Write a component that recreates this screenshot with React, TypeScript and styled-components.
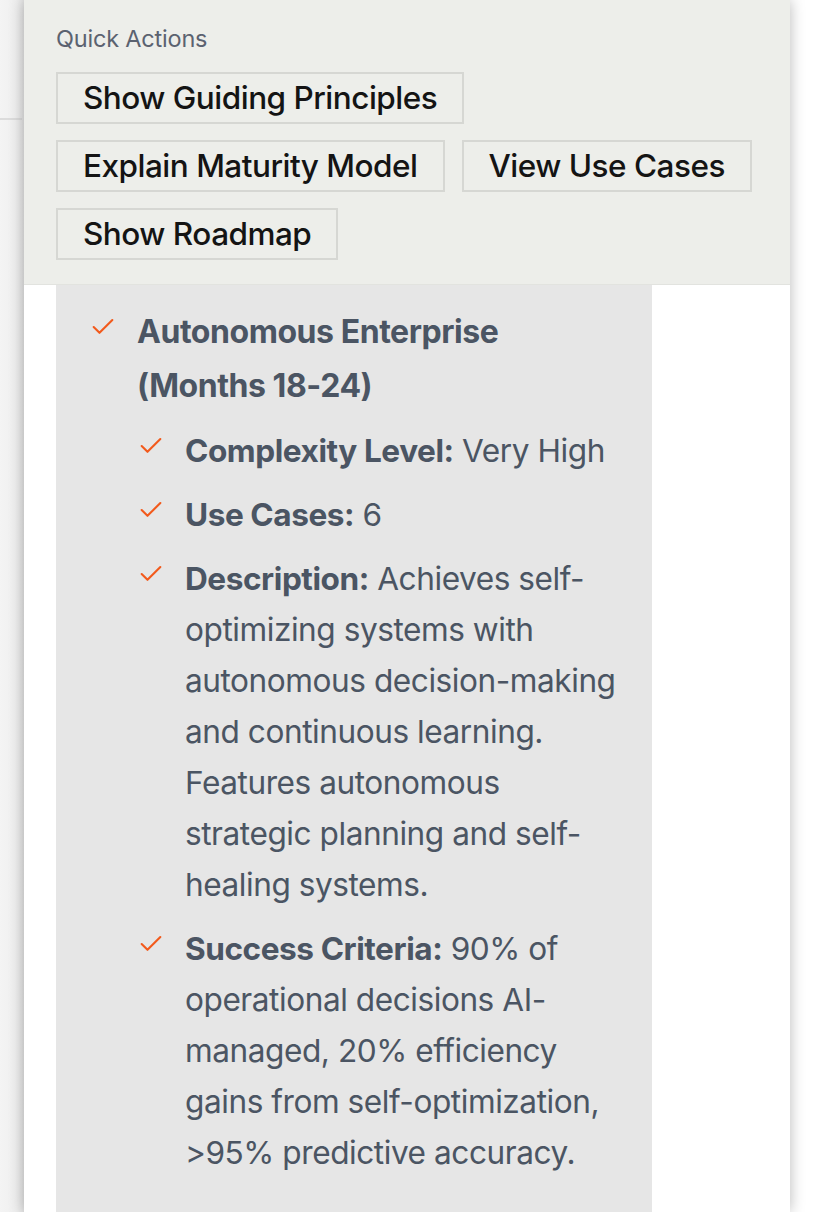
import React from 'react';
import styled, { createGlobalStyle } from 'styled-components';
import { Check } from 'lucide-react';

const GlobalStyle = createGlobalStyle`
  html, body {
    margin: 0;
    padding: 0;
    background: #ffffff;
  }
  body {
    font-family: Inter, 'Noto Sans', 'Liberation Sans', sans-serif;
    -webkit-font-smoothing: antialiased;
  }
`;

const Page = styled.div`
  display: flex;
  height: 1212px;
  overflow: hidden;
`;

const Gutter = styled.div`
  width: 24px;
  flex: none;
  background: linear-gradient(to right, #f4f4f4 0%, #efefef 70%, #e7e7e7 100%);
`;

const GutterRule = styled.div`
  margin-top: 118px;
  width: 22px;
  height: 2px;
  background: #dcdcdc;
`;

const Panel = styled.div`
  width: 766px;
  flex: none;
  background: #ffffff;
  box-shadow: 0 0 14px rgba(0, 0, 0, 0.28);
  position: relative;
  z-index: 1;
`;

const QuickActions = styled.div`
  background: #edeeea;
  padding: 25px 32px 24px;
  border-bottom: 1px solid #e2e3df;
`;

const Label = styled.div`
  font-size: 23.5px;
  line-height: 28px;
  color: #5b6270;
  letter-spacing: -0.2px;
`;

const ActionRow = styled.div`
  display: flex;
  flex-wrap: wrap;
  gap: 16px 17px;
  margin-top: 19px;
  max-width: 700px;
`;

const ActionButton = styled.button`
  height: 52px;
  padding: 0 25px;
  border: 2px solid #d6d7d3;
  background: transparent;
  color: #141414;
  font-family: inherit;
  font-size: 31.5px;
  font-weight: 500;
  letter-spacing: -0.5px;
  line-height: 1;
  cursor: pointer;
`;

const Body = styled.div`
  padding: 0 32px;
`;

const Response = styled.div`
  width: 596px;
  min-height: 960px;
  box-sizing: border-box;
  background: #e6e6e6;
  padding: 20px 30px 40px 33px;
`;

const List = styled.ul<{ nested?: boolean }>`
  list-style: none;
  margin: ${({ nested }) => (nested ? '12px 0 0' : '0')};
  padding: 0;
  display: flex;
  flex-direction: column;
  gap: 13px;
`;

const Item = styled.li<{ heading?: boolean }>`
  display: flex;
  align-items: flex-start;
  color: #4b5563;
  font-size: ${({ heading }) => (heading ? '32px' : '31.6px')};
  letter-spacing: -0.45px;
  line-height: ${({ heading }) => (heading ? '54px' : '51px')};
  font-weight: ${({ heading }) => (heading ? 700 : 400)};
`;

const Mark = styled.span<{ heading?: boolean }>`
  width: 48px;
  flex: none;
  display: flex;
  padding-top: ${({ heading }) => (heading ? '8px' : '7px')};
  color: #f25a1c;
`;

const Text = styled.div`
  flex: 1;
  min-width: 0;
  strong {
    font-weight: 700;
  }
`;

const actions = [
  'Show Guiding Principles',
  'Explain Maturity Model',
  'View Use Cases',
  'Show Roadmap',
];

const details = [
  { label: 'Complexity Level:', text: 'Very High' },
  { label: 'Use Cases:', text: '6' },
  {
    label: 'Description:',
    text: 'Achieves self-optimizing systems with autonomous decision-making and continuous learning. Features autonomous strategic planning and self-healing systems.',
  },
  {
    label: 'Success Criteria:',
    text: '90% of operational decisions AI-managed, 20% efficiency gains from self-optimization, >95% predictive accuracy.',
  },
];

const Tick = ({ heading }: { heading?: boolean }) => (
  <Mark heading={heading}>
    <Check size={28} strokeWidth={1.8} />
  </Mark>
);

export default function App() {
  return (
    <>
      <GlobalStyle />
      <Page>
        <Gutter>
          <GutterRule />
        </Gutter>
        <Panel>
          <QuickActions>
            <Label>Quick Actions</Label>
            <ActionRow>
              {actions.map((a) => (
                <ActionButton key={a}>{a}</ActionButton>
              ))}
            </ActionRow>
          </QuickActions>
          <Body>
            <Response>
              <List>
                <Item heading>
                  <Tick heading />
                  <Text>
                    Autonomous Enterprise (Months 18-24)
                    <List nested>
                      {details.map((d) => (
                        <Item key={d.label}>
                          <Tick />
                          <Text>
                            <strong>{d.label}</strong> {d.text}
                          </Text>
                        </Item>
                      ))}
                    </List>
                  </Text>
                </Item>
              </List>
            </Response>
          </Body>
        </Panel>
      </Page>
    </>
  );
}
